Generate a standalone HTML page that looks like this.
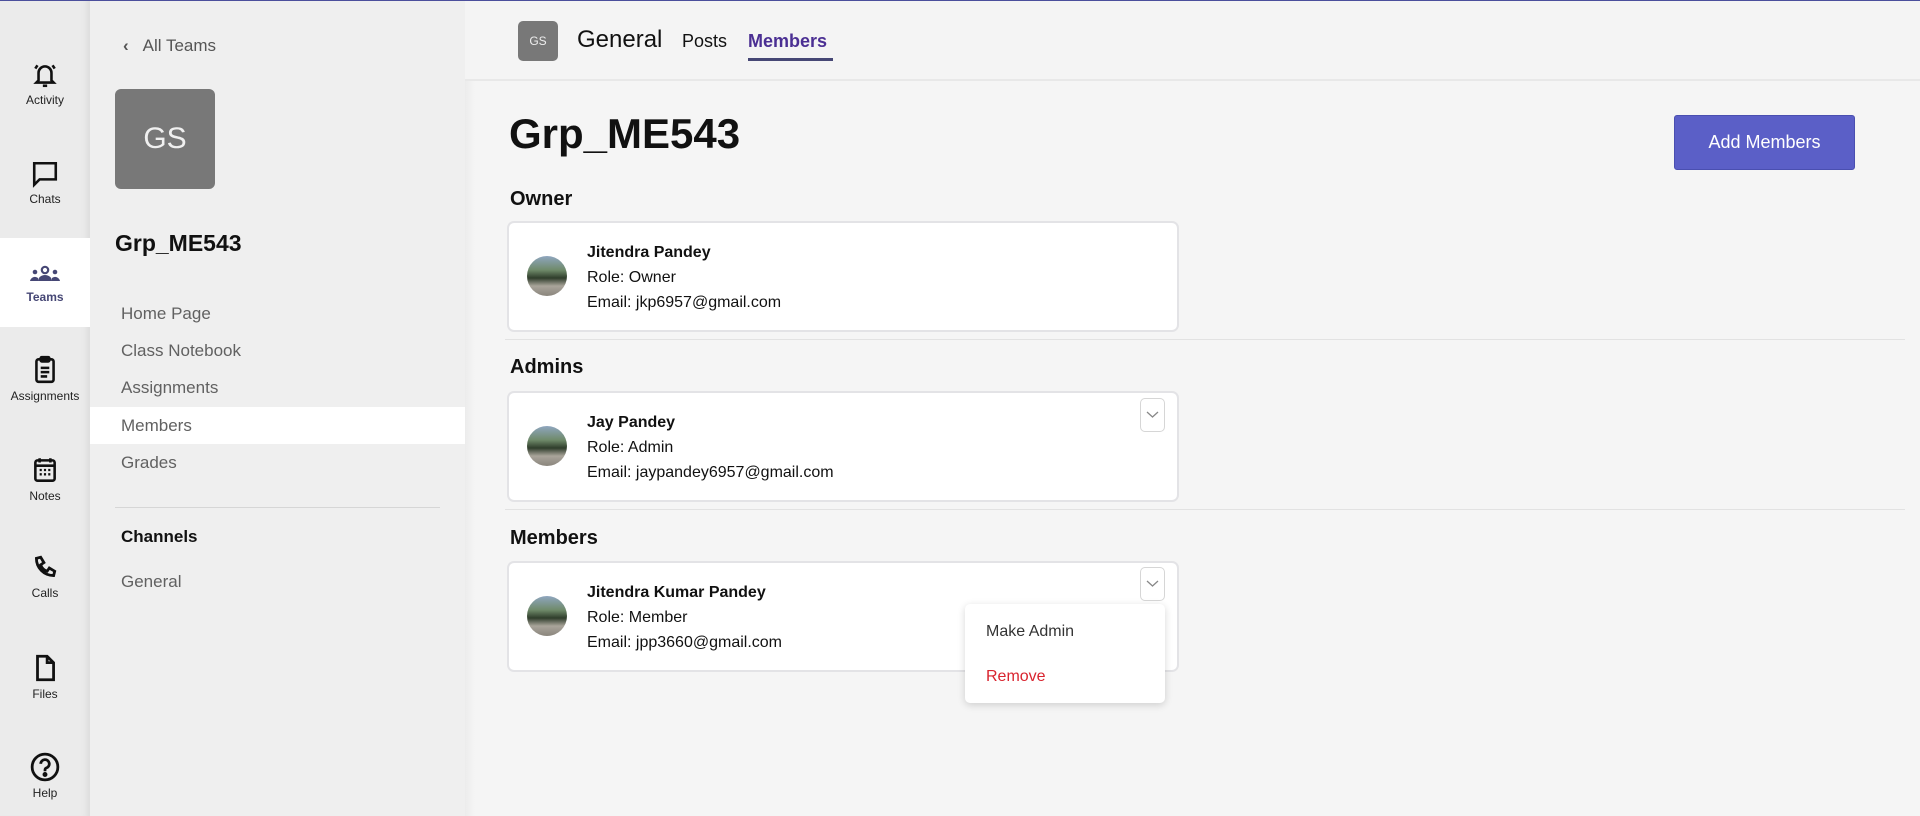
<!DOCTYPE html>
<html><head><meta charset="utf-8"><style>
*{margin:0;padding:0;box-sizing:border-box}
body{width:1920px;height:816px;overflow:hidden;background:#f5f5f5;font-family:"Liberation Sans",sans-serif;position:relative;color:#111}
.abs{position:absolute}
.topline{left:0;top:0;width:1920px;height:1px;background:#4b4f9c;z-index:5}
.rail{left:0;top:0;width:90px;height:816px;background:#ebebeb;box-shadow:inset -8px 0 8px -6px rgba(0,0,0,.08)}
.ri{position:absolute;left:0;width:90px;text-align:center;font-size:12px;color:#222}
.ri svg{display:block;margin:0 auto 4px}
.side{left:90px;top:0;width:375px;height:816px;background:#efefef}
.nav{position:absolute;left:31px;font-size:17px;color:#616161}
.main-strip{left:465px;top:0;width:10px;height:816px;background:linear-gradient(90deg,#ececec,#f5f5f5)}
.hdr{left:465px;top:0;width:1455px;height:81px;background:#f4f4f4;border-bottom:2px solid #e8e8e8}
.card{position:absolute;left:507px;width:672px;background:#fff;border:2px solid #e3e3e6;border-radius:7px}
.av{position:absolute;left:18px;width:40px;height:40px;border-radius:50%;background:linear-gradient(180deg,#8fa6bf 0,#6f8a6a 35%,#2f3d2b 55%,#a9a49a 75%,#8a857c)}
.info{position:absolute;left:78px;font-size:16px;line-height:25px;color:#111}
.info b{font-weight:bold}
.sec{position:absolute;left:510px;font-size:20px;font-weight:bold}
.sep{position:absolute;left:505px;width:1400px;height:1px;background:#e2e2e2}
.dd{position:absolute;left:1140px;width:25px;height:34px;border:1px solid #d6d6d6;border-radius:5px;background:#fff}
</style></head><body>
<div class="abs topline"></div>
<div class="abs rail">
 <div class="abs" style="left:0;top:238px;width:90px;height:89px;background:#fff"></div>
 <div class="ri" style="top:61px"><svg width="28" height="28" viewBox="0 0 26 26" fill="none" stroke="#111" stroke-width="2.4"><path d="M7 18V11a6 6 0 0 1 12 0v7l2 2H5z"/><path d="M11 23h4"/><path d="M6 4 4 7M20 4l2 3"/></svg>Activity</div>
 <div class="ri" style="top:160px"><svg width="28" height="28" viewBox="0 0 26 26" fill="none" stroke="#111" stroke-width="2.4"><path d="M3 3h20v15H8l-5 5z"/></svg>Chats</div>
 <div class="ri" style="top:264px;color:#464775;font-weight:bold"><svg width="32" height="22" viewBox="0 0 30 22" fill="#464775"><circle cx="15" cy="6" r="3.2" fill="none" stroke="#464775" stroke-width="2.2"/><path d="M8 17a7 6 0 0 1 14 0z"/><circle cx="5" cy="8" r="2.3"/><circle cx="25" cy="8" r="2.3"/><path d="M0 17a5 5 0 0 1 8 -3v3zM22 14a5 5 0 0 1 8 3h-8z"/></svg>Teams</div>
 <div class="ri" style="top:355px"><svg width="28" height="30" viewBox="0 0 26 28" fill="none" stroke="#111" stroke-width="2.4"><rect x="5" y="4" width="16" height="21" rx="2"/><rect x="9" y="2" width="8" height="4" rx="1"/><path d="M9 12h8M9 16h8M9 20h6"/></svg>Assignments</div>
 <div class="ri" style="top:455px"><svg width="28" height="30" viewBox="0 0 26 28" fill="none" stroke="#111" stroke-width="2.4"><rect x="4" y="5" width="18" height="19" rx="2"/><path d="M4 10h18M8 3v4M18 3v4"/><path d="M8 14h2M12 14h2M16 14h2M8 18h2M12 18h2M16 18h2" stroke-width="2.2"/></svg>Notes</div>
 <div class="ri" style="top:554px"><svg width="28" height="28" viewBox="0 0 26 26" fill="none" stroke="#111" stroke-width="2.6"><path d="M5 4l4-1 3 5-3 2c1 3 3 5 6 6l2-3 5 3-1 4c-9 0-16-7-16-16z"/></svg>Calls</div>
 <div class="ri" style="top:653px"><svg width="28" height="30" viewBox="0 0 26 28" fill="none" stroke="#111" stroke-width="2.6"><path d="M6 3h9l6 6v16H6z"/><path d="M15 3v6h6"/></svg>Files</div>
 <div class="ri" style="top:752px"><svg width="30" height="30" viewBox="0 0 28 28" fill="none" stroke="#111" stroke-width="2.6"><circle cx="14" cy="14" r="12"/><path d="M10 11a4 4 0 1 1 5 4c-1 .5-1 1-1 3"/><circle cx="14" cy="21" r="1" fill="#111"/></svg>Help</div>
</div>
<div class="abs side">
 <div class="nav" style="left:33px;top:36px;color:#555;font-size:17px"><span style="display:inline-block;margin-right:14px;font-weight:bold">&#8249;</span>All Teams</div>
 <div class="abs" style="left:25px;top:89px;width:100px;height:100px;background:#787878;border-radius:6px;color:#f0f0f0;font-size:30px;text-align:center;line-height:100px">GS</div>
 <div class="abs" style="left:25px;top:230px;font-size:23px;font-weight:bold;color:#111">Grp_ME543</div>
 <div class="nav" style="top:304px">Home Page</div>
 <div class="nav" style="top:341px">Class Notebook</div>
 <div class="nav" style="top:378px">Assignments</div>
 <div class="abs" style="left:0;top:407px;width:375px;height:37px;background:#fff"></div>
 <div class="nav" style="top:416px">Members</div>
 <div class="nav" style="top:453px">Grades</div>
 <div class="abs" style="left:25px;top:507px;width:325px;height:1px;background:#d6d6d6"></div>
 <div class="nav" style="top:527px;color:#111;font-weight:bold">Channels</div>
 <div class="nav" style="top:572px">General</div>
</div>
<div class="abs main-strip"></div>
<div class="abs hdr">
 <div class="abs" style="left:53px;top:21px;width:40px;height:40px;background:#787878;border-radius:5px;color:#eee;font-size:12px;line-height:40px;text-align:center">GS</div>
 <div class="abs" style="left:112px;top:26px;font-size:24px;color:#111">General</div>
 <div class="abs" style="left:217px;top:31px;font-size:18px;color:#111">Posts</div>
 <div class="abs" style="left:283px;top:31px;font-size:18px;color:#4b2f93;font-weight:bold">Members</div>
 <div class="abs" style="left:283px;top:58px;width:85px;height:3px;background:#464775"></div>
</div>
<div class="abs" style="left:509px;top:110px;font-size:42px;font-weight:bold;color:#111">Grp_ME543</div>
<div class="abs" style="left:1674px;top:115px;width:181px;height:55px;background:#5b5fc7;border:1px solid #4a4fb0;border-radius:3px;color:#fff;font-size:18px;text-align:center;line-height:53px">Add Members</div>
<div class="sec" style="top:188px">Owner</div>
<div class="card" style="top:221px;height:111px"><div class="av" style="top:33px"></div><div class="info" style="top:17px"><b>Jitendra Pandey</b><br>Role: Owner<br>Email: jkp6957@gmail.com</div></div>
<div class="sep" style="top:339px"></div>
<div class="sec" style="top:356px">Admins</div>
<div class="card" style="top:391px;height:111px"><div class="av" style="top:33px"></div><div class="info" style="top:17px"><b>Jay Pandey</b><br>Role: Admin<br>Email: jaypandey6957@gmail.com</div></div>
<div class="dd" style="top:398px"><svg width="23" height="32" viewBox="0 0 23 32"><path d="M6 13l5.5 5 5.5-5" fill="none" stroke="#888" stroke-width="1.3"/></svg></div>
<div class="sep" style="top:509px"></div>
<div class="sec" style="top:527px">Members</div>
<div class="card" style="top:561px;height:111px"><div class="av" style="top:33px"></div><div class="info" style="top:17px"><b>Jitendra Kumar Pandey</b><br>Role: Member<br>Email: jpp3660@gmail.com</div></div>
<div class="dd" style="top:567px"><svg width="23" height="32" viewBox="0 0 23 32"><path d="M6 13l5.5 5 5.5-5" fill="none" stroke="#888" stroke-width="1.3"/></svg></div>
<div class="abs" style="left:965px;top:604px;width:200px;height:99px;background:#fff;border-radius:5px;box-shadow:0 2px 8px rgba(0,0,0,.16)">
 <div class="abs" style="left:21px;top:19px;font-size:16px;color:#333">Make Admin</div>
 <div class="abs" style="left:21px;top:64px;font-size:16px;color:#d9242f">Remove</div>
</div>
</body></html>
